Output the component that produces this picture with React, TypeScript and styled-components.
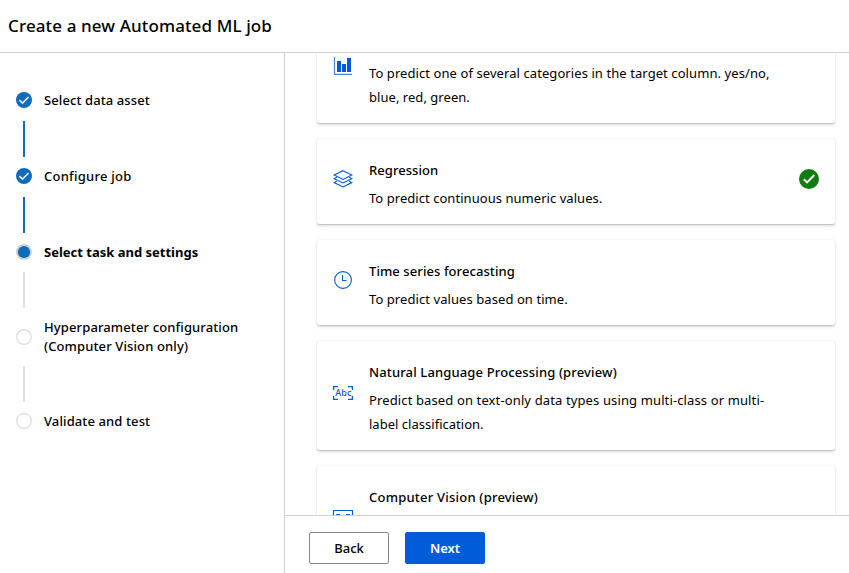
import React, { Fragment, type ReactNode } from 'react';
import styled, { createGlobalStyle } from 'styled-components';

const GlobalStyle = createGlobalStyle`
  * { box-sizing: border-box; }
  html, body { margin: 0; background: #fff; overflow: hidden; }
  body { color: #000; font: 400 13px/19px "Noto Sans", "Open Sans", sans-serif; }
`;

const Page = styled.div`
  display: flex;
  flex-direction: column;
  height: 100vh;
`;

const Header = styled.header`
  flex: none;
  height: 53px;
  padding: 0 8px;
  border-bottom: 1px solid #d2d0ce;
`;

const PageTitle = styled.h1`
  margin: 0;
  font-size: 17px;
  font-weight: 500;
  line-height: 51px;
  letter-spacing: 0.12px;
`;

const Body = styled.div`
  display: flex;
  flex: 1;
  min-height: 0;
`;

const Sidebar = styled.nav`
  flex: none;
  width: 285px;
  padding: 37px 16px 0;
  border-right: 1px solid #d2d0ce;
`;

const Step = styled.div`
  display: grid;
  grid-template-columns: 16px 1fr;
  column-gap: 12px;
  align-items: center;
  min-height: 20px;

  &:last-child { margin-top: -1px; }
`;

const StepLabel = styled.span<{ $current?: boolean; $tracking: number }>`
  font-weight: ${p => (p.$current ? 700 : 500)};
  letter-spacing: ${p => p.$tracking}px;
  white-space: pre-line;
`;

const Connector = styled.div<{ $done: boolean }>`
  width: 2px;
  height: 36px;
  margin: ${p => (p.$done ? '11px 0 9px 7px' : '10px 0 10px 7px')};
  background: ${p => (p.$done ? '#0f6cbd' : '#e1dfdd')};
`;

const Main = styled.main`
  display: flex;
  flex: 1;
  flex-direction: column;
  min-width: 0;
`;

const ScrollArea = styled.div`
  display: flex;
  flex: 1;
  flex-direction: column;
  gap: 16px;
  min-height: 0;
  padding: 0 14px 0 32px;
  overflow: hidden;
`;

const Card = styled.section`
  display: grid;
  grid-template-columns: 20px 1fr 21px;
  column-gap: 16px;
  align-items: center;
  flex: none;
  padding: 21px 16px 14px;
  border-radius: 2px;
  background: #fff;
  box-shadow: 0 1.6px 3.6px rgba(0, 0, 0, 0.14), 0 0.3px 0.9px rgba(0, 0, 0, 0.14);

  /* The list is scrolled part of the way through its first card. */
  &:first-child { margin-top: -39px; }
`;

const IconSlot = styled.span`
  display: flex;
  justify-content: center;
  align-items: center;
  height: 20px;
  margin-bottom: 12px;
  svg { flex: none; overflow: visible; }
`;

const CardTitle = styled.h2<{ $tracking: number }>`
  min-height: 20px;
  margin: 0 0 6px;
  font-size: 13px;
  font-weight: 500;
  line-height: 20px;
  letter-spacing: ${p => p.$tracking}px;
`;

const CardText = styled.p`
  margin: 0;
  line-height: 24px;
`;

const TextLine = styled.span<{ $tracking: number }>`
  display: block;
  min-height: 24px;
  letter-spacing: ${p => p.$tracking}px;
  white-space: nowrap;
`;

const Footer = styled.footer`
  display: flex;
  flex: none;
  gap: 16px;
  height: 58px;
  padding: 16px 24px 0;
  border-top: 1px solid #d2d0ce;
`;

const Button = styled.button<{ $primary?: boolean }>`
  width: 80px;
  height: 32px;
  padding: 0;
  border: 1px solid ${p => (p.$primary ? '#015cda' : '#8a8886')};
  border-radius: 2px;
  background: ${p => (p.$primary ? '#015cda' : '#fff')};
  color: ${p => (p.$primary ? '#fff' : '#000')};
  font: ${p => (p.$primary ? 600 : 500)} 13px/19px "Noto Sans", "Open Sans", sans-serif;
`;

const BLUE = '#015cda';

type StepState = 'done' | 'current' | 'todo';

const StepMark = ({ state }: { state: StepState }) => (
  <svg width="16" height="16" viewBox="0 0 16 16" fill="none">
    {state === 'done' && (
      <>
        <circle cx="8" cy="8" r="8" fill="#0f6cbd" />
        <path d="M3.4 8.2 6.5 11.1 12.6 5" stroke="#e3effa" strokeWidth="1.6" />
      </>
    )}
    {state === 'current' && (
      <>
        <circle cx="8" cy="8" r="8" fill="#d2d0ce" />
        <circle cx="8" cy="8" r="6.1" fill="#0f6cbd" />
      </>
    )}
    {state === 'todo' && <circle cx="8" cy="8" r="7.3" stroke="#e1dfdd" strokeWidth="1.4" />}
  </svg>
);

const ChartIcon = () => (
  <svg width="18" height="18" viewBox="0 0 18 18">
    <path d="M.5 0v17.4H18" fill="none" stroke="#4b82e5" strokeWidth="1.2" />
    <path d="M3 4h4v11H3zM8 7h4v8H8zM13 1h4v14h-4z" fill={BLUE} />
  </svg>
);

const LayersIcon = () => (
  <svg width="20" height="18" viewBox="0 0 20 18" fill="none" stroke={BLUE} strokeWidth="1.1">
    <path d="M10 .7 18.8 5 10 9.4 1.2 5z" />
    <path d="M3.8 7.2 1.2 8.7 10 13l8.8-4.3-2.6-1.5" />
    <path d="M3.8 11 1.2 12.6 10 17l8.8-4.4-2.6-1.6" />
  </svg>
);

const ClockIcon = () => (
  <svg width="18" height="18" viewBox="0 0 18 18" fill="none" stroke={BLUE} strokeWidth="1.1">
    <circle cx="9" cy="9" r="8.4" />
    <path d="M8.5 4v5.5h4" />
  </svg>
);

const TextIcon = () => (
  <svg width="20" height="14" viewBox="0 0 20 14">
    <path d="M5 .6H.6V4M15 .6h4.4V4M.6 10v3.4H5M19.4 10v3.4H15" fill="none" stroke={BLUE} strokeWidth="1.3" />
    <text x="10.3" y="10.2" textAnchor="middle" fontSize="9" fontWeight="500" fontFamily="Noto Sans" textLength="16" fill={BLUE}>Abc</text>
  </svg>
);

const VisionIcon = () => (
  <svg width="20" height="16" viewBox="0 0 20 16" fill="none" stroke={BLUE}>
    <path d="M.5.5h19v15H.5z" strokeWidth="1.2" />
    <path d="M3.5 7V4.5H7M13 4.5h3.5V7M3.5 9.5V12H7M13 12h3.5V9.5" />
  </svg>
);

const SelectedMark = () => (
  <svg width="20" height="20" viewBox="0 0 20 20">
    <circle cx="10" cy="10" r="10" fill="#107c10" />
    <path d="m4.8 10.2 3.3 3.2 7.2-7.4" fill="none" stroke="#fff" strokeWidth="1.9" />
  </svg>
);

const steps: { label: string; state: StepState; tracking: number }[] = [
  { label: 'Select data asset', state: 'done', tracking: 0.1 },
  { label: 'Configure job', state: 'done', tracking: 0.25 },
  { label: 'Select task and settings', state: 'current', tracking: 0 },
  { label: 'Hyperparameter configuration\n(Computer Vision only)', state: 'todo', tracking: 0.12 },
  { label: 'Validate and test', state: 'todo', tracking: 0.11 },
];

type Task = {
  title: string;
  titleTracking: number;
  lines: [text: string, tracking: number][];
  icon: ReactNode;
  selected?: boolean;
};

const tasks: Task[] = [
  {
    title: '',
    titleTracking: 0,
    lines: [
      ['To predict one of several categories in the target column. yes/no,', 0.08],
      ['blue, red, green.', 0.04],
    ],
    icon: <ChartIcon />,
  },
  {
    title: 'Regression',
    titleTracking: 0.05,
    lines: [['To predict continuous numeric values.', 0.045]],
    icon: <LayersIcon />,
    selected: true,
  },
  {
    title: 'Time series forecasting',
    titleTracking: 0.08,
    lines: [['To predict values based on time.', 0.075]],
    icon: <ClockIcon />,
  },
  {
    title: 'Natural Language Processing (preview)',
    titleTracking: 0.14,
    lines: [
      ['Predict based on text-only data types using multi-class or multi-', 0.125],
      ['label classification.', 0.02],
    ],
    icon: <TextIcon />,
  },
  {
    title: 'Computer Vision (preview)',
    titleTracking: 0.22,
    lines: [['', 0], ['', 0]],
    icon: <VisionIcon />,
  },
];

export default function App() {
  return (
    <Page>
      <GlobalStyle />
      <Header>
        <PageTitle>Create a new Automated ML job</PageTitle>
      </Header>
      <Body>
        <Sidebar>
          {steps.map((step, i) => (
            <Fragment key={step.label}>
              <Step>
                <StepMark state={step.state} />
                <StepLabel $current={step.state === 'current'} $tracking={step.tracking}>
                  {step.label}
                </StepLabel>
              </Step>
              {i < steps.length - 1 && <Connector $done={step.state === 'done'} />}
            </Fragment>
          ))}
        </Sidebar>
        <Main>
          <ScrollArea>
            {tasks.map((task, index) => (
              <Card key={index}>
                <IconSlot>{task.icon}</IconSlot>
                <div>
                  <CardTitle $tracking={task.titleTracking}>{task.title}</CardTitle>
                  <CardText>
                    {task.lines.map(([text, tracking], i) => (
                      <TextLine key={i} $tracking={tracking}>{text}</TextLine>
                    ))}
                  </CardText>
                </div>
                {task.selected && <IconSlot><SelectedMark /></IconSlot>}
              </Card>
            ))}
          </ScrollArea>
          <Footer>
            <Button>Back</Button>
            <Button $primary>Next</Button>
          </Footer>
        </Main>
      </Body>
    </Page>
  );
}
